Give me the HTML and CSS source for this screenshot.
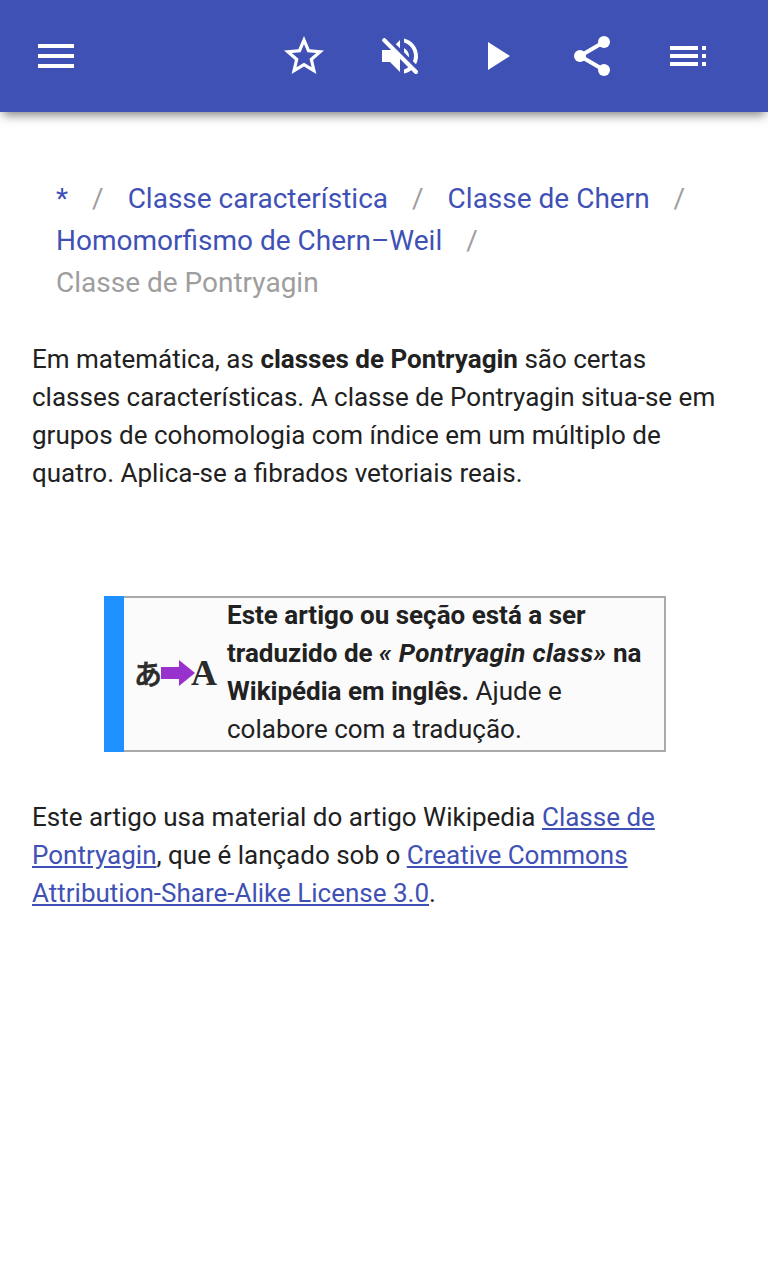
FILE: index.html
```html
<!DOCTYPE html>
<html lang="pt">
<head>
    <meta charset="UTF-8">
    <meta name="viewport" content="width=device-width, initial-scale=1.0">
    <title>Classe de Pontryagin</title>
    <link rel="stylesheet" href="styles.css">
</head>
<body>

    <header class="toolbar">
        <button class="icon-button" aria-label="Menu">
            <svg viewBox="0 0 24 24"><path d="M3 18h18v-2H3v2zm0-5h18v-2H3v2zm0-7v2h18V6H3z"/></svg>
        </button>
        <div class="toolbar-actions">
            <button class="icon-button" aria-label="Favorito">
                <svg viewBox="0 0 24 24"><path d="M22 9.24l-7.19-.62L12 2 9.19 8.63 2 9.24l5.46 4.73L5.82 21 12 17.27 18.18 21l-1.63-7.03L22 9.24zM12 15.4l-3.76 2.27 1-4.28-3.32-2.88 4.38-.38L12 6.1l1.71 4.04 4.38.38-3.32 2.88 1 4.28L12 15.4z"/></svg>
            </button>
            <button class="icon-button" aria-label="Som">
                <svg viewBox="0 0 24 24"><path d="M16.5 12c0-1.77-1.02-3.29-2.5-4.03v2.21l2.45 2.45c.03-.2.05-.41.05-.63zm2.5 0c0 .94-.2 1.82-.54 2.64l1.51 1.51C20.63 14.91 21 13.5 21 12c0-4.28-2.99-7.86-7-8.77v2.06c2.89.86 5 3.54 5 6.71zM4.27 3L3 4.27 7.73 9H3v6h4l5 5v-6.73l4.25 4.25c-.67.52-1.42.93-2.25 1.18v2.06c1.38-.31 2.63-.95 3.69-1.81L19.73 21 21 19.73l-9-9L4.27 3zM12 4L9.91 6.09 12 8.18V4z"/><path class="slash" d="M4.1 4.1l15.9 15.9"/></svg>
            </button>
            <button class="icon-button" aria-label="Reproduzir">
                <svg viewBox="0 0 24 24"><path d="M8 5v14l11-7z"/></svg>
            </button>
            <button class="icon-button" aria-label="Compartilhar">
                <svg viewBox="0 0 24 24"><circle cx="18" cy="5" r="3"/><circle cx="6" cy="12" r="3"/><circle cx="18" cy="19" r="3"/><path class="slash" d="M18 5L6 12l12 7L6 12z"/></svg>
            </button>
            <button class="icon-button" aria-label="Sumário">
                <svg viewBox="0 0 24 24"><path d="M3 9h14V7H3v2zm0 4h14v-2H3v2zm0 4h14v-2H3v2zm16 0h2v-2h-2v2zm0-10v2h2V7h-2zm0 6h2v-2h-2v2z"/></svg>
            </button>
        </div>
    </header>

    <main class="content">
        <nav class="breadcrumb">
            <a href="#">*</a><span class="separator">/</span>
            <a href="#">Classe característica</a><span class="separator">/</span>
            <a href="#">Classe de Chern</a><span class="separator">/</span>
            <a href="#">Homomorfismo de Chern–Weil</a><span class="separator">/</span>
            <span class="current">Classe de Pontryagin</span>
        </nav>

        <p class="intro">Em matemática, as <b>classes de Pontryagin</b> são certas classes características. A classe de Pontryagin situa-se em grupos de cohomologia com índice em um múltiplo de quatro. Aplica-se a fibrados vetoriais reais.</p>

        <div class="notice">
            <div class="notice-body">
                <div class="notice-icon">
                    <span class="kana">あ</span>
                    <svg class="arrow" viewBox="0 0 34 26"><path d="M0 7h18V0l16 13-16 13v-7H0z"/></svg>
                    <span class="latin">A</span>
                </div>
                <div class="notice-text"><b>Este artigo ou seção está a ser traduzido de <i>« Pontryagin class»</i> na Wikipédia em inglês.</b> Ajude e colabore com a tradução.</div>
            </div>
        </div>

        <p class="license">Este artigo usa material do artigo Wikipedia <a href="#">Classe de Pontryagin</a>, que é lançado sob o <a href="#">Creative Commons Attribution-Share-Alike License 3.0</a>.</p>
    </main>

</body>
</html>
```
FILE: styles.css
```css
* {
    box-sizing: border-box;
}

body {
    margin: 0;
    background-color: #fff;
    color: #212121;
    font-family: Roboto, sans-serif;
    font-size: 26px;
    line-height: 38px;
}

a {
    color: #3f51b5;
}

p {
    margin: 0;
}

.toolbar {
    display: flex;
    justify-content: space-between;
    align-items: center;
    height: 112px;
    padding: 0 32px;
    background-color: #3f51b5;
    box-shadow: 0 6px 10px -3px rgba(0, 0, 0, 0.5);
}

.toolbar-actions {
    display: flex;
    gap: 48px;
    margin-right: 24px;
}

.icon-button {
    width: 48px;
    height: 48px;
    padding: 0;
    border: none;
    background: none;
    cursor: pointer;
}

.icon-button svg {
    display: block;
    width: 48px;
    height: 48px;
    fill: #fff;
}

.slash {
    stroke: #fff;
    stroke-width: 2;
    stroke-linecap: round;
}

.content {
    padding: 66px 32px 0;
}

.breadcrumb {
    display: flex;
    flex-wrap: wrap;
    padding: 0 24px;
    color: #9e9e9e;
    font-size: 28px;
    line-height: 42px;
}

.breadcrumb a {
    text-decoration: none;
}

.separator {
    padding: 0 24px;
}

.intro {
    margin-top: 36px;
}

.notice {
    width: 562px;
    margin: 104px 0 0 72px;
    padding-left: 20px;
    background-color: #1e90ff;
}

.notice-body {
    display: flex;
    align-items: center;
    height: 156px;
    border: 2px solid #aaa;
    border-left: none;
    background-color: #fbfbfb;
}

.notice-text {
    padding-bottom: 4px;
}

.notice-text i {
    letter-spacing: 0.33px;
}

.notice-icon {
    display: flex;
    align-items: center;
    flex: none;
    width: 80px;
    margin: 0 12px 2px 11px;
    color: #2b2b2b;
}

.kana {
    width: 26px;
    font-family: "Noto Sans CJK JP", sans-serif;
    font-size: 28px;
    font-weight: 500;
    text-indent: -1px;
    -webkit-text-stroke: 0.7px #2b2b2b;
}

.arrow {
    flex: none;
    width: 34px;
    height: 26px;
    fill: #9932cc;
}

.latin {
    margin-left: -4px;
    font-family: "Liberation Serif", serif;
    font-size: 36px;
    font-weight: bold;
}

.license {
    margin-top: 46px;
}
```
